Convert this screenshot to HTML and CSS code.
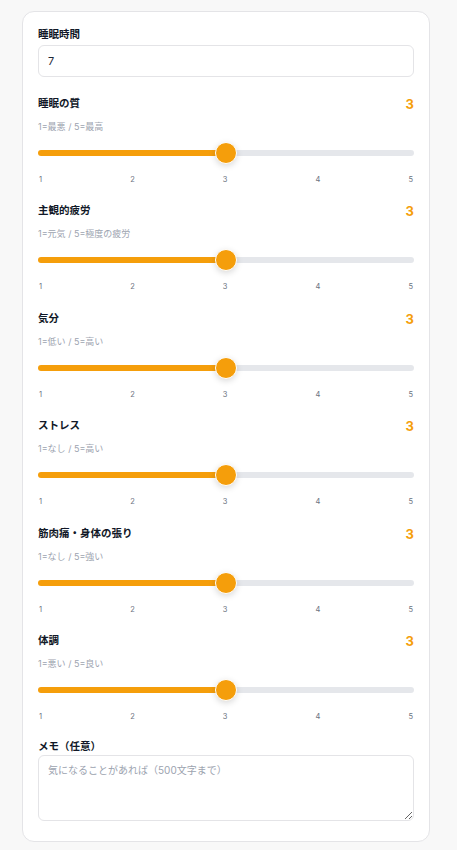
FILE: index.html
```html
<!DOCTYPE html>
<html lang="ja">
<head>
<meta charset="utf-8">
<link rel="stylesheet" href="styles.css">
</head>
<body>
<div class="page">
  <form class="card">
    <div class="field">
      <label class="label">睡眠時間</label>
      <input class="input" type="text" value="7">
    </div>

    <div class="scale first">
      <div class="scale-head"><span class="label">睡眠の質</span><span class="value">3</span></div>
      <div class="hint">1=最悪 / 5=最高</div>
      <input class="range" type="range" min="1" max="5" value="3" style="--p:50%">
      <div class="ticks"><span>1</span><span>2</span><span>3</span><span>4</span><span>5</span></div>
    </div>

    <div class="scale">
      <div class="scale-head"><span class="label">主観的疲労</span><span class="value">3</span></div>
      <div class="hint">1=元気 / 5=極度の疲労</div>
      <input class="range" type="range" min="1" max="5" value="3" style="--p:50%">
      <div class="ticks"><span>1</span><span>2</span><span>3</span><span>4</span><span>5</span></div>
    </div>

    <div class="scale">
      <div class="scale-head"><span class="label">気分</span><span class="value">3</span></div>
      <div class="hint">1=低い / 5=高い</div>
      <input class="range" type="range" min="1" max="5" value="3" style="--p:50%">
      <div class="ticks"><span>1</span><span>2</span><span>3</span><span>4</span><span>5</span></div>
    </div>

    <div class="scale">
      <div class="scale-head"><span class="label">ストレス</span><span class="value">3</span></div>
      <div class="hint">1=なし / 5=高い</div>
      <input class="range" type="range" min="1" max="5" value="3" style="--p:50%">
      <div class="ticks"><span>1</span><span>2</span><span>3</span><span>4</span><span>5</span></div>
    </div>

    <div class="scale">
      <div class="scale-head"><span class="label">筋肉痛・身体の張り</span><span class="value">3</span></div>
      <div class="hint">1=なし / 5=強い</div>
      <input class="range" type="range" min="1" max="5" value="3" style="--p:50%">
      <div class="ticks"><span>1</span><span>2</span><span>3</span><span>4</span><span>5</span></div>
    </div>

    <div class="scale">
      <div class="scale-head"><span class="label">体調</span><span class="value">3</span></div>
      <div class="hint">1=悪い / 5=良い</div>
      <input class="range" type="range" min="1" max="5" value="3" style="--p:50%">
      <div class="ticks"><span>1</span><span>2</span><span>3</span><span>4</span><span>5</span></div>
    </div>

    <div class="field memo">
      <label class="label">メモ（任意）</label>
      <textarea class="textarea" placeholder="気になることがあれば（500文字まで）"></textarea>
    </div>
  </form>
</div>
</body>
</html>
```

FILE: styles.css
```css
* { box-sizing: border-box; }

html, body {
  margin: 0;
  background: #f8f8f8;
}

body {
  font-family: Inter, "Noto Sans CJK JP", sans-serif;
  color: #111827;
}

.page {
  padding: 11px 27px 9px 22px;
}

.card {
  background: #ffffff;
  border: 1px solid #e4e4e7;
  border-radius: 12px;
  padding: 16px 15px 20px 15px;
  display: flex;
  flex-direction: column;
  gap: 17.4px;
}

.field {
  display: flex;
  flex-direction: column;
  gap: 2px;
}

.first {
  margin-top: 1.6px;
}

.memo {
  margin-top: 0;
  gap: 0;
}

.label {
  display: block;
  height: 16px;
  font-size: 10.5px;
  line-height: 16px;
  font-weight: 700;
  color: #111827;
  overflow: visible;
}

.input {
  margin: 0;
  height: 32px;
  border: 1px solid #e4e4e7;
  border-radius: 6px;
  padding: 0 9px;
  font-family: Inter, "Noto Sans CJK JP", sans-serif;
  font-size: 11px;
  color: #1f2937;
  background: #fff;
  outline: none;
}

.field .label {
  margin-top: -1px;
}

.textarea {
  margin: 0;
  display: block;
  height: 66px;
  border: 1px solid #e4e4e7;
  border-radius: 6px;
  padding: 7px 9px;
  font-family: Inter, "Noto Sans CJK JP", sans-serif;
  font-size: 10px;
  line-height: 14px;
  color: #1f2937;
  background: #fff;
  resize: vertical;
  outline: none;
}

.textarea::placeholder {
  color: #9ca3af;
}

.scale {
  display: flex;
  flex-direction: column;
}

.scale-head {
  display: flex;
  justify-content: space-between;
  align-items: center;
  height: 16px;
}

.value {
  font-size: 13px;
  font-weight: 700;
  color: #f59e0b;
  line-height: 16px;
}

.hint {
  margin-top: 8px;
  height: 13px;
  font-size: 9px;
  line-height: 13px;
  color: #9ca3af;
}

.range {
  -webkit-appearance: none;
  appearance: none;
  margin: 9px 0 0 0;
  width: 100%;
  height: 22px;
  background: transparent;
  outline: none;
}

.range::-webkit-slider-runnable-track {
  height: 6px;
  border-radius: 3px;
  background: linear-gradient(to right, #f59e0b 0, #f59e0b var(--p), #e5e7eb var(--p), #e5e7eb 100%);
}

.range::-webkit-slider-thumb {
  -webkit-appearance: none;
  appearance: none;
  width: 22px;
  height: 22px;
  margin-top: -8px;
  border-radius: 50%;
  background: #f59e0b;
  border: 1.5px solid #ffffff;
  box-shadow: 0 2px 6px rgba(0, 0, 0, 0.15);
}

.ticks {
  margin-top: 10px;
  height: 12px;
  display: flex;
  justify-content: space-between;
  font-size: 7.5px;
  line-height: 12px;
  color: #6b7280;
  padding: 0 1px;
}
```
